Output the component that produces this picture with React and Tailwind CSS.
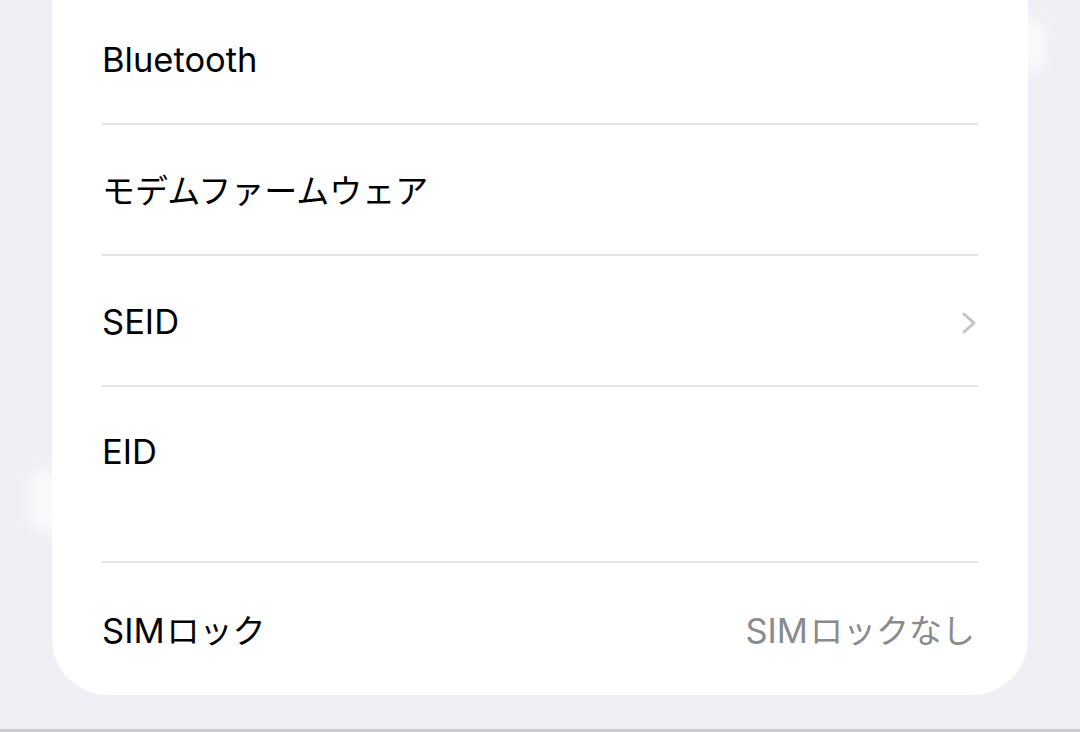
import React from "react";

// Latin runs are set a touch larger than the kana, as on the device
const Txt = ({ parts, className }) => (
  <span className={"leading-none flex items-baseline " + className}>
    {parts.map((p, i) =>
      p.cjk ? (
        <span key={i} className={"text-[33px]" + (i > 0 ? " ml-[2px]" : "")}>
          {p.t}
        </span>
      ) : (
        <span key={i} className="text-[34.5px]">
          {p.t}
        </span>
      )
    )}
  </span>
);

const Row = ({ label, value, chevron, extra, last }) => (
  <div
    className={
      extra
        ? "h-[174px] flex items-start"
        : last
        ? "h-[132px] flex items-center"
        : "h-[129px] flex items-center"
    }
  >
    <div
      className={
        "flex w-full items-center justify-between px-[50px] pt-[4px]" +
        (extra ? " h-[126px]" : "")
      }
    >
      <Txt parts={label} className="text-black" />
      {value && <Txt parts={value} className="text-[#8a8a8e] mr-[3px]" />}
      {chevron && (
        <svg width="16" height="24" viewBox="0 0 16 24" className="mr-[1px]">
          <polyline
            points="3,3 13,12 3,21"
            fill="none"
            stroke="#c4c4c7"
            strokeWidth="3"
            strokeLinecap="round"
            strokeLinejoin="round"
          />
        </svg>
      )}
    </div>
  </div>
);

const Divider = () => <div className="mx-[50px] h-[2px] bg-[#e3e3e5]" />;

export default function App() {
  return (
    <div
      className="relative h-[732px] overflow-hidden bg-[#f0eff5] flex flex-col"
      style={{ fontFamily: 'Inter, "Noto Sans CJK JP", sans-serif' }}
    >
      <div className="mx-[52px] -mt-[6px] bg-white rounded-b-[56px]">
        <Row label={[{ t: "Bluetooth" }]} />
        <Divider />
        <Row label={[{ t: "モデムファームウェア", cjk: true }]} />
        <Divider />
        <Row label={[{ t: "SEID" }]} chevron />
        <Divider />
        <Row label={[{ t: "EID" }]} extra />
        <Divider />
        <Row
          last
          label={[{ t: "SIM" }, { t: "ロック", cjk: true }]}
          value={[{ t: "SIM" }, { t: "ロックなし", cjk: true }]}
        />
      </div>
      <div className="flex-1" />
      <div className="h-[3px] bg-[#c9c9cd]" />

      {/* smudges on the screenshot */}
      <div className="absolute left-[30px] top-[470px] w-[30px] h-[62px] rounded-full bg-white blur-[6px] opacity-70" />
      <div className="absolute left-[1022px] top-[20px] w-[22px] h-[52px] rounded-full bg-white blur-[6px] opacity-70" />
    </div>
  );
}
